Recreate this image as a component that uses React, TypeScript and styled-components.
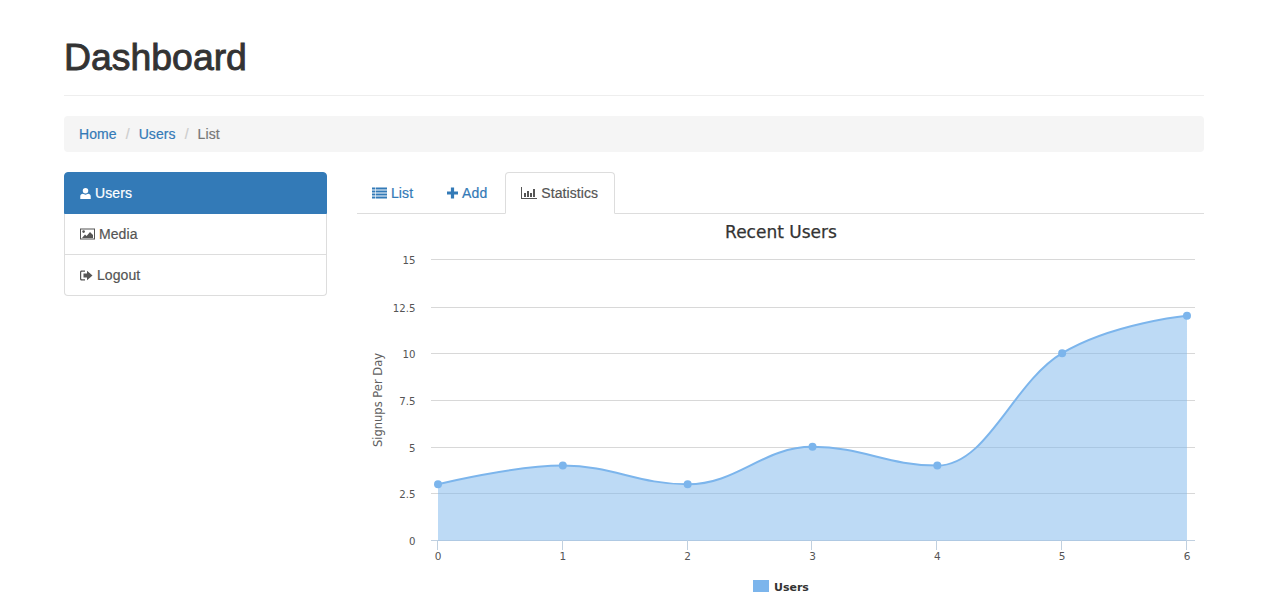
import React from "react";
import styled, { createGlobalStyle } from "styled-components";

const Global = createGlobalStyle`
  html, body { margin: 0; padding: 0; background: #fff; overflow: hidden; }
  body { font-family: "Liberation Sans", Arial, sans-serif; font-size: 14px; line-height: 20px; color: #333; letter-spacing: 0.08px; -webkit-text-stroke: 0.2px; }
  * { box-sizing: border-box; }
`;

const Container = styled.div`
  width: 1140px;
  margin-left: 64px;
  height: 613px;
  overflow: hidden;
`;
const Header = styled.header`
  margin-top: 38px;
  padding-bottom: 18px;
  border-bottom: 1px solid #eee;
`;
const Title = styled.h1`
  margin: 0;
  font-size: 37.4px;
  font-weight: 500;
  line-height: 39px;
  letter-spacing: 0;
  -webkit-text-stroke: 0.9px #333;
  color: #333;
`;
const Breadcrumb = styled.nav`
  display: flex;
  margin-top: 20px;
  height: 36px;
  padding: 8px 15px;
  background: #f5f5f5;
  border-radius: 4px;
  font-size: 14px;
`;
const Crumb = styled.span<{ $link?: boolean }>`
  color: ${(p) => (p.$link ? "#337ab7" : "#777")};
`;
const Sep = styled.span`
  color: #ccc;
  padding: 0 9px 0 9px;
`;
const Columns = styled.div`
  display: grid;
  grid-template-columns: 263px 847px;
  column-gap: 30px;
  margin-top: 20px;
`;
const ListGroup = styled.div`
  display: flex;
  flex-direction: column;
  align-self: start;
`;
const ListItem = styled.div<{ $active?: boolean }>`
  display: flex;
  align-items: center;
  gap: 4px;
  height: ${(p) => (p.$active ? "42px" : "41px")};
  padding: 0 15px;
  border: 1px solid ${(p) => (p.$active ? "#337ab7" : "#ddd")};
  border-top-width: ${(p) => (p.$active ? "1px" : "0")};
  background: ${(p) => (p.$active ? "#337ab7" : "#fff")};
  color: ${(p) => (p.$active ? "#fff" : "#555")};
  &:first-child { border-radius: 4px 4px 0 0; }
  &:last-child { border-radius: 0 0 4px 4px; }
`;
const Tabs = styled.div`
  display: flex;
  height: 42px;
  border-bottom: 1px solid #ddd;
`;
const Tab = styled.div<{ $active?: boolean }>`
  display: flex;
  align-items: center;
  gap: 4px;
  height: ${(p) => (p.$active ? "42px" : "41px")};
  padding: 0 16px 0 15px;
  margin-right: 2px;
  border: ${(p) => (p.$active ? "1px solid #ddd" : "0")};
  border-bottom-color: #fff;
  border-radius: 4px 4px 0 0;
  background: ${(p) => (p.$active ? "#fff" : "transparent")};
  color: ${(p) => (p.$active ? "#555" : "#337ab7")};
  &:first-child { padding-right: 17px; }
`;
const ChartSvg = styled.svg`
  display: block;
  -webkit-text-stroke: 0;
  letter-spacing: 0;
`;
const Icon = styled.svg`
  flex: none;
  fill: currentColor;
`;

const IconUser = () => (
  <Icon width="11" height="13" viewBox="0 0 12 13">
    <circle cx="6" cy="3.5" r="3" />
    <path d="M0.3 12.6V9.6C0.3 8.2 1.6 7.2 3.2 6.9C4 7.5 5 7.8 6 7.8C7 7.8 8 7.5 8.8 6.9C10.4 7.2 11.7 8.2 11.7 9.6V12.6Z" />
  </Icon>
);
const IconPicture = () => (
  <Icon width="15" height="12" viewBox="0 0 15 12">
    <path fillRule="evenodd" d="M0 0.5H15V11.5H0ZM1 1.5V10.5H14V1.5Z" />
    <circle cx="3.6" cy="3.6" r="1.3" />
    <path d="M2 10L5 6.6L6.6 8L10 4L13 7V10Z" />
  </Icon>
);
const IconLogout = () => (
  <Icon width="13" height="11" viewBox="0 0 13 11">
    <path d="M5 0.5H1.5C0.7 0.5 0 1.2 0 2V9C0 9.8 0.7 10.5 1.5 10.5H5V9.3H1.9C1.5 9.3 1.2 9 1.2 8.6V2.4C1.2 2 1.5 1.7 1.9 1.7H5Z" />
    <path d="M3.5 3.6H7V0.8L12.5 5.5L7 10.2V7.4H3.5Z" />
  </Icon>
);
const IconList = () => (
  <Icon width="15" height="12" viewBox="0 0 15 12">
    <path d="M0 0.5H3V2.5H0ZM3.6 0.5H15V2.5H3.6ZM0 3.5H3V5.5H0ZM3.6 3.5H15V5.5H3.6ZM0 6.5H3V8.5H0ZM3.6 6.5H15V8.5H3.6ZM0 9.5H3V11.5H0ZM3.6 9.5H15V11.5H3.6Z" />
  </Icon>
);
const IconPlus = () => (
  <Icon width="11" height="12" viewBox="0.5 0.5 11 11">
    <path d="M4.4 0.5H7.6V4.4H11.5V7.6H7.6V11.5H4.4V7.6H0.5V4.4H4.4Z" />
  </Icon>
);
const IconStats = () => (
  <Icon width="16" height="12" viewBox="0 0 16 12">
    <path d="M0 0H1V11H16V12H0ZM3 6H5V10H3ZM6 4H8V10H6ZM9 6H11V10H9ZM12 2H14V10H12Z" />
  </Icon>
);

const data = [3, 4, 3, 5, 4, 10, 12];
const X0 = 81;
const XSTEP = 124.83;
const Y0 = 326;
const YUNIT = 18.73;
const px = (i: number) => X0 + XSTEP * i;
const py = (v: number) => Y0 - YUNIT * v;
const yTicks = [
  { y: 326, l: "0" },
  { y: 279, l: "2.5" },
  { y: 233, l: "5" },
  { y: 186, l: "7.5" },
  { y: 139, l: "10" },
  { y: 93, l: "12.5" },
  { y: 45, l: "15" },
];

function splinePath(): string {
  const pts = data.map((v, i) => ({ x: px(i), y: py(v) + 0.5 }));
  const s = 1.5;
  const d = 2.5;
  const conts = pts.map((p, i) => {
    if (i === 0 || i === pts.length - 1) return { lx: p.x, ly: p.y, rx: p.x, ry: p.y };
    const a = pts[i - 1];
    const b = pts[i + 1];
    const lx = (s * p.x + a.x) / d;
    let ly = (s * p.y + a.y) / d;
    const rx = (s * p.x + b.x) / d;
    let ry = (s * p.y + b.y) / d;
    const c = ((ry - ly) * (rx - p.x)) / (rx - lx) + p.y - ry;
    ly += c;
    ry += c;
    if (ly > a.y && ly > p.y) {
      ly = Math.max(a.y, p.y);
      ry = 2 * p.y - ly;
    } else if (ly < a.y && ly < p.y) {
      ly = Math.min(a.y, p.y);
      ry = 2 * p.y - ly;
    }
    if (ry > b.y && ry > p.y) {
      ry = Math.max(b.y, p.y);
      ly = 2 * p.y - ry;
    } else if (ry < b.y && ry < p.y) {
      ry = Math.min(b.y, p.y);
      ly = 2 * p.y - ry;
    }
    return { lx, ly, rx, ry };
  });
  let path = `M${pts[0].x} ${pts[0].y}`;
  for (let i = 1; i < pts.length; i++) {
    path += ` C${conts[i - 1].rx} ${conts[i - 1].ry} ${conts[i].lx} ${conts[i].ly} ${pts[i].x} ${pts[i].y}`;
  }
  return path;
}

const chartFont = `"DejaVu Sans", sans-serif`;

const Chart = () => {
  const line = splinePath();
  const area = `${line} L${px(6)} ${Y0 + 0.5} L${px(0)} ${Y0 + 0.5} Z`;
  return (
    <ChartSvg width="847" height="385" viewBox="0 0 847 385">
      <text x="424" y="24" textAnchor="middle" fontFamily={chartFont} fontSize="17" fill="#333" stroke="#333" strokeWidth="0.25">
        Recent Users
      </text>
      {yTicks.map((t) => (
        <g key={t.l}>
          <line x1="74" x2="838" y1={t.y + 0.5} y2={t.y + 0.5} stroke={t.l === "0" ? "#c0d0e0" : "#d8d8d8"} strokeWidth="1" />
          <text x="58.5" y={t.y + 5} textAnchor="end" fontFamily={chartFont} fontSize="10.2" fill="#555">
            {t.l}
          </text>
        </g>
      ))}
      <text transform="translate(25 186) rotate(-90)" textAnchor="middle" fontFamily={chartFont} fontSize="11.5" fill="#606060">
        Signups Per Day
      </text>
      <path d={area} fill="#7cb5ec" fillOpacity="0.5" />
      <path d={line} fill="none" stroke="#7cb5ec" strokeWidth="2" />
      {data.map((v, i) => (
        <circle key={i} cx={px(i)} cy={py(v) + 0.5} r="4" fill="#7cb5ec" />
      ))}
      {data.map((_, i) => (
        <g key={i}>
          <line x1={Math.round(px(i)) - 0.5} x2={Math.round(px(i)) - 0.5} y1={Y0} y2={Y0 + 10} stroke="#c0d0e0" />
          <text x={px(i)} y={Y0 + 19.5} textAnchor="middle" fontFamily={chartFont} fontSize="10.5" fill="#555">
            {i}
          </text>
        </g>
      ))}
      <rect x="396" y="366" width="16" height="12" fill="#7cb5ec" />
      <text x="417" y="377" fontFamily={chartFont} fontSize="11" fontWeight="bold" fill="#333">
        Users
      </text>
    </ChartSvg>
  );
};

export default function App() {
  return (
    <>
      <Global />
      <Container>
        <Header>
          <Title>Dashboard</Title>
        </Header>
        <Breadcrumb>
          <Crumb $link>Home</Crumb>
          <Sep>/</Sep>
          <Crumb $link>Users</Crumb>
          <Sep>/</Sep>
          <Crumb>List</Crumb>
        </Breadcrumb>
        <Columns>
          <ListGroup>
            <ListItem $active><IconUser />Users</ListItem>
            <ListItem><IconPicture />Media</ListItem>
            <ListItem><IconLogout />Logout</ListItem>
          </ListGroup>
          <div>
            <Tabs>
              <Tab><IconList />List</Tab>
              <Tab><IconPlus />Add</Tab>
              <Tab $active><IconStats />Statistics</Tab>
            </Tabs>
            <Chart />
          </div>
        </Columns>
      </Container>
    </>
  );
}
